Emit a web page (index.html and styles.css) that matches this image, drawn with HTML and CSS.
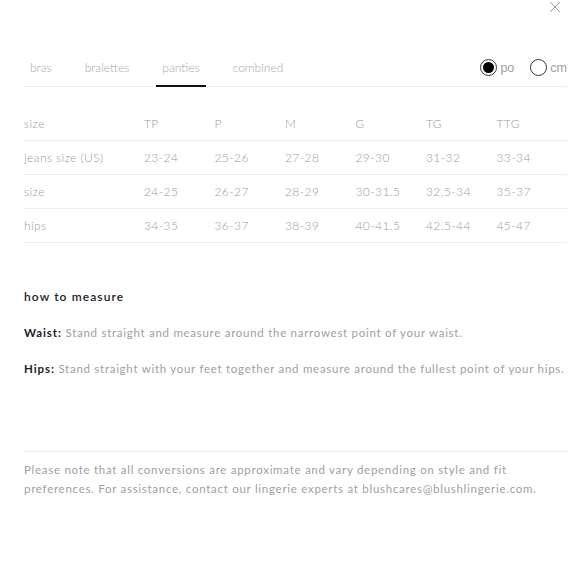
FILE: index.html
```html
<!DOCTYPE html>
<html>
<head>
<meta charset="utf-8">
<link rel="stylesheet" href="styles.css">
</head>
<body>
<div class="modal">
  <button class="close" aria-label="close">
    <svg width="12" height="12" viewBox="0 0 12 12"><path d="M1 1L11 11M11 1L1 11" stroke="#9a9a9a" stroke-width="1" fill="none"/></svg>
  </button>
  <div class="topbar">
    <nav class="tabs">
      <span class="tab">bras</span>
      <span class="tab">bralettes</span>
      <span class="tab active">panties</span>
      <span class="tab">combined</span>
    </nav>
    <div class="units">
      <label class="unit"><span class="radio checked"></span>po</label>
      <label class="unit"><span class="radio"></span>cm</label>
    </div>
  </div>
  <div class="table">
    <div class="row">
      <span class="label">size</span><span>TP</span><span>P</span><span>M</span><span>G</span><span>TG</span><span>TTG</span>
    </div>
    <div class="row">
      <span class="label">jeans size (US)</span><span>23-24</span><span>25-26</span><span>27-28</span><span>29-30</span><span>31-32</span><span>33-34</span>
    </div>
    <div class="row">
      <span class="label">size</span><span>24-25</span><span>26-27</span><span>28-29</span><span>30-31.5</span><span>32.5-34</span><span>35-37</span>
    </div>
    <div class="row">
      <span class="label">hips</span><span>34-35</span><span>36-37</span><span>38-39</span><span>40-41.5</span><span>42.5-44</span><span>45-47</span>
    </div>
  </div>
  <section class="measure">
    <h3>how to measure</h3>
    <p><b>Waist:</b> Stand straight and measure around the narrowest point of your waist.</p>
    <p><b>Hips:</b> Stand straight with your feet together and measure around the fullest point of your hips.</p>
  </section>
  <p class="note">Please note that all conversions are approximate and vary depending on style and fit preferences. For assistance, contact our lingerie experts at blushcares@blushlingerie.com.</p>
</div>
</body>
</html>
```
FILE: styles.css
```css
* { box-sizing: border-box; }
html, body { margin: 0; padding: 0; background: #fff; }
body { font-family: Lato, "Liberation Sans", sans-serif; }
.modal {
  position: relative;
  width: 580px;
  padding: 49px 13px 0 24px;
}
.close {
  position: absolute;
  top: 1px;
  right: 19px;
  border: 0;
  background: none;
  padding: 0;
  width: 12px;
  height: 12px;
  cursor: pointer;
}
.close svg { display: block; }
.topbar {
  display: flex;
  justify-content: space-between;
  align-items: center;
  border-bottom: 1px solid #eeeeee;
  height: 38px;
}
.tabs { display: flex; gap: 21px; align-self: stretch; }
.tab {
  font-size: 12px;
  font-weight: 300;
  color: #a8a8a8;
  padding: 0 6px;
  display: flex;
  align-items: center;
  border-bottom: 2px solid transparent;
  margin-bottom: -1px;
}
.tab.active { border-bottom-color: #111; }
.units { display: flex; gap: 16px; align-items: center; }
.unit {
  display: flex;
  align-items: center;
  gap: 3px;
  font-family: "Liberation Sans", Arial, sans-serif;
  font-size: 12.5px;
  color: #a0a0a0;
}
.radio {
  width: 17px;
  height: 17px;
  border: 1px solid #333;
  border-radius: 50%;
  display: flex;
  align-items: center;
  justify-content: center;
}
.radio.checked::after {
  content: "";
  width: 11px;
  height: 11px;
  border-radius: 50%;
  background: #000;
}
.table { margin-top: 20px; }
.row {
  display: grid;
  grid-template-columns: 120px repeat(6, 70.5px);
  height: 34px;
  align-items: center;
  border-bottom: 1px solid #eeeeee;
  font-size: 12px;
  font-weight: 300;
  color: #9a9a9a;
  letter-spacing: 0.4px;
}
.measure { margin-top: 46px; }
.measure h3 {
  margin: 0;
  font-size: 12px;
  font-weight: 600;
  letter-spacing: 1.1px;
  color: #222;
  line-height: 16px;
}
.measure p {
  margin: 20px 0 0;
  font-size: 11.5px;
  line-height: 16px;
  color: #a0a0a0;
  letter-spacing: 0.72px;
}
.measure b { color: #222; font-weight: 700; letter-spacing: 0.9px; }
.note {
  margin: 74px 0 0;
  padding-top: 8px;
  border-top: 1px solid #eeeeee;
  font-size: 11.5px;
  line-height: 19px;
  color: #a0a0a0;
  letter-spacing: 0.72px;
}
```
